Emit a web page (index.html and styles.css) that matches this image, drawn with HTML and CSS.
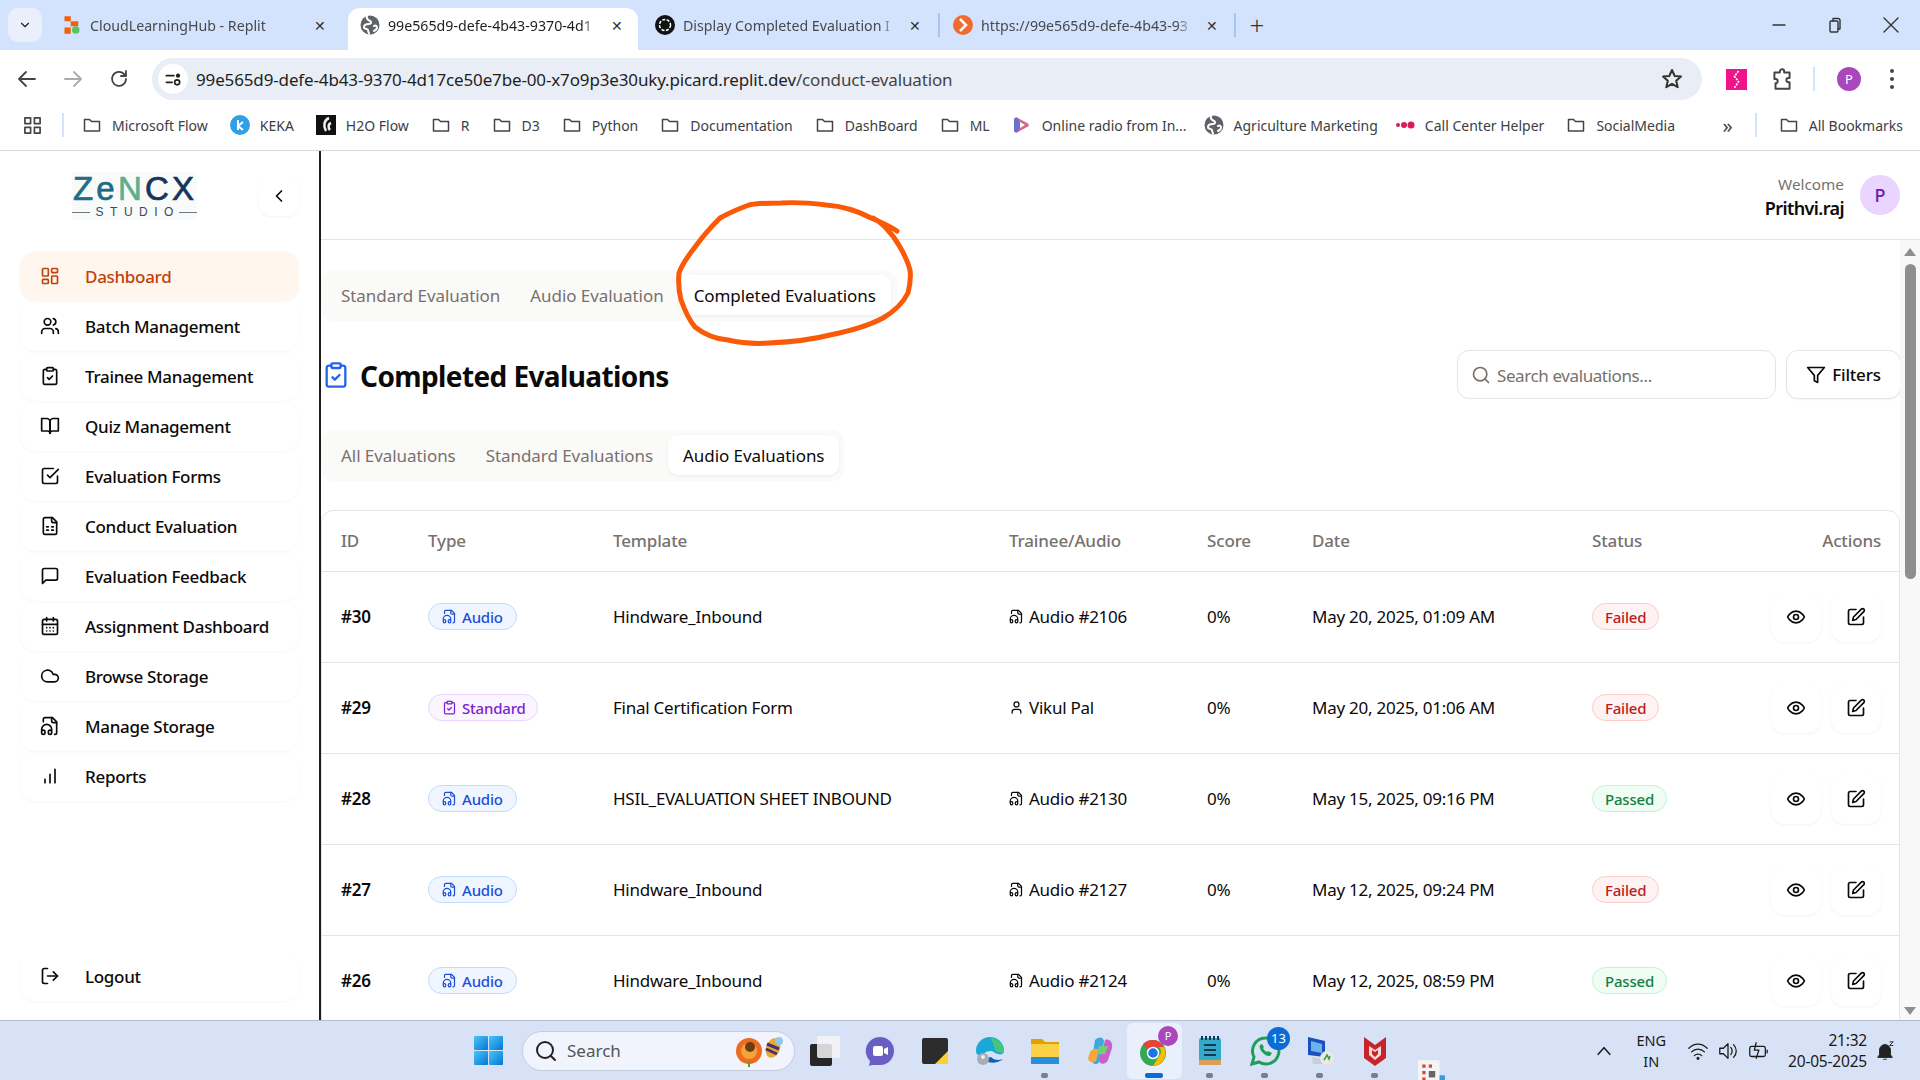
FILE: index.html
```html
<!DOCTYPE html>
<html lang="en">
<head>
    <meta charset="UTF-8">
    <title>Completed Evaluations</title>
    <link rel="stylesheet" href="styles.css">
</head>
<body>

<svg class="sprite" width="0" height="0">
    <symbol id="i-dash" viewBox="0 0 24 24"><rect x="3" y="3" width="7" height="9" rx="1"/><rect x="14" y="3" width="7" height="5" rx="1"/><rect x="14" y="12" width="7" height="9" rx="1"/><rect x="3" y="16" width="7" height="5" rx="1"/></symbol>
    <symbol id="i-users" viewBox="0 0 24 24"><path d="M16 21v-2a4 4 0 0 0-4-4H6a4 4 0 0 0-4 4v2"/><circle cx="9" cy="7" r="4"/><path d="M22 21v-2a4 4 0 0 0-3-3.87"/><path d="M16 3.13a4 4 0 0 1 0 7.75"/></symbol>
    <symbol id="i-clip" viewBox="0 0 24 24"><rect x="8" y="2" width="8" height="4" rx="1"/><path d="M16 4h2a2 2 0 0 1 2 2v14a2 2 0 0 1-2 2H6a2 2 0 0 1-2-2V6a2 2 0 0 1 2-2h2"/><path d="m9 14 2 2 4-4"/></symbol>
    <symbol id="i-book" viewBox="0 0 24 24"><path d="M2 3h6a4 4 0 0 1 4 4v14a3 3 0 0 0-3-3H2z"/><path d="M22 3h-6a4 4 0 0 0-4 4v14a3 3 0 0 1 3-3h7z"/></symbol>
    <symbol id="i-check" viewBox="0 0 24 24"><path d="m9 11 3 3L22 4"/><path d="M21 12v7a2 2 0 0 1-2 2H5a2 2 0 0 1-2-2V5a2 2 0 0 1 2-2h11"/></symbol>
    <symbol id="i-sheet" viewBox="0 0 24 24"><path d="M15 2H6a2 2 0 0 0-2 2v16a2 2 0 0 0 2 2h12a2 2 0 0 0 2-2V7Z"/><path d="M14 2v4a2 2 0 0 0 2 2h4"/><path d="M8 13h2M14 13h2M8 17h2M14 17h2"/></symbol>
    <symbol id="i-msg" viewBox="0 0 24 24"><path d="M21 15a2 2 0 0 1-2 2H7l-4 4V5a2 2 0 0 1 2-2h14a2 2 0 0 1 2 2z"/></symbol>
    <symbol id="i-cal" viewBox="0 0 24 24"><path d="M8 2v4M16 2v4"/><rect x="3" y="4" width="18" height="18" rx="2"/><path d="M3 10h18M8 14h.01M12 14h.01M16 14h.01M8 18h.01M12 18h.01M16 18h.01"/></symbol>
    <symbol id="i-cloud" viewBox="0 0 24 24"><path d="M17.5 19H9a7 7 0 1 1 6.71-9h1.79a4.5 4.5 0 1 1 0 9Z"/></symbol>
    <symbol id="i-audio" viewBox="0 0 24 24"><path d="M17.5 22h.5a2 2 0 0 0 2-2V7l-5-5H6a2 2 0 0 0-2 2v3"/><path d="M14 2v4a2 2 0 0 0 2 2h4"/><path d="M2 19a2 2 0 1 1 4 0v1a2 2 0 1 1-4 0v-4a6 6 0 0 1 12 0v4a2 2 0 1 1-4 0v-1a2 2 0 1 1 4 0"/></symbol>
    <symbol id="i-bars" viewBox="0 0 24 24"><path d="M12 20V10M18 20V4M6 20v-4"/></symbol>
    <symbol id="i-logout" viewBox="0 0 24 24"><path d="M9 21H5a2 2 0 0 1-2-2V5a2 2 0 0 1 2-2h4"/><path d="m16 17 5-5-5-5"/><path d="M21 12H9"/></symbol>
    <symbol id="i-left" viewBox="0 0 24 24"><path d="m15 18-6-6 6-6"/></symbol>
    <symbol id="i-eye" viewBox="0 0 24 24"><path d="M2 12s3-7 10-7 10 7 10 7-3 7-10 7-10-7-10-7Z"/><circle cx="12" cy="12" r="3"/></symbol>
    <symbol id="i-pen" viewBox="0 0 24 24"><path d="M12 3H5a2 2 0 0 0-2 2v14a2 2 0 0 0 2 2h14a2 2 0 0 0 2-2v-7"/><path d="M18.375 2.625a2.121 2.121 0 1 1 3 3L12 15l-4 1 1-4Z"/></symbol>
    <symbol id="i-search" viewBox="0 0 24 24"><circle cx="11" cy="11" r="8"/><path d="m21 21-4.3-4.3"/></symbol>
    <symbol id="i-filter" viewBox="0 0 24 24"><polygon points="22 3 2 3 10 12.46 10 19 14 21 14 12.46 22 3"/></symbol>
    <symbol id="i-user" viewBox="0 0 24 24"><path d="M19 21v-2a4 4 0 0 0-4-4H9a4 4 0 0 0-4 4v2"/><circle cx="12" cy="7" r="4"/></symbol>
    <symbol id="i-folder" viewBox="0 0 20 20"><path d="M2.5 4.5h5l2 2h8v9.5h-15z"/></symbol>
    <symbol id="i-globe" viewBox="0 0 20 20"><circle cx="10" cy="10" r="9.500" fill="#5f6368" stroke="none"/><path d="M7 1.500C6 4 8 5 10 6s1 3-1 3-5 0-5 3 4 1 4 3 1 3 1 3.500M14 11c2-1 3 0 3 1.500s-2 3-3 3.500" fill="none" stroke="#fff" stroke-width="2"/></symbol>
</svg>

<!-- browser tabs -->
<div class="tabstrip">
    <div class="tab-list"><svg class="ic s14" viewBox="0 0 24 24"><path d="m6 9 6 6 6-6"/></svg></div>
    <div class="tab tab-first">
        <svg class="fav" viewBox="0 0 16 16"><rect x="2" y="1" width="5" height="4" fill="#f26207"/><rect x="7" y="5" width="6" height="4" fill="#f26207"/><rect x="2" y="10" width="5" height="5" fill="#f26207"/><circle cx="11" cy="12" r="3" fill="#58c26b"/></svg>
        <span class="tab-title">CloudLearningHub - Replit</span><span class="tab-x">✕</span>
    </div>
    <div class="tab tab-active">
        <svg class="fav ic"><use href="#i-globe"/></svg>
        <span class="tab-title">99e565d9-defe-4b43-9370-4d1</span><span class="tab-x">✕</span>
    </div>
    <div class="tab tab-sep tab-third">
        <svg class="fav" viewBox="0 0 20 20"><circle cx="10" cy="10" r="10" fill="#111"/><circle cx="10" cy="10" r="5.5" fill="none" stroke="#fff" stroke-width="1.5" stroke-dasharray="3 1.5"/></svg>
        <span class="tab-title">Display Completed Evaluation I</span><span class="tab-x">✕</span>
    </div>
    <div class="tab tab-sep tab-fourth">
        <svg class="fav" viewBox="0 0 20 20"><circle cx="10" cy="10" r="10" fill="#f26b2e"/><path d="M7 4l6 6-6 6" fill="none" stroke="#fff" stroke-width="2.5"/></svg>
        <span class="tab-title">https://99e565d9-defe-4b43-93</span><span class="tab-x">✕</span>
    </div>
    <div class="new-tab">+</div>
    <div class="win-btns">
        <svg class="ic thin s20" viewBox="0 0 20 20"><path d="M4 10h12"/></svg>
        <svg class="ic thin s20" viewBox="0 0 20 20"><rect x="5" y="6" width="8" height="11" rx="1"/><path d="M8 6V3.5h5a2 2 0 0 1 2 2V14h-2"/></svg>
        <svg class="ic thin s20" viewBox="0 0 20 20"><path d="M3 3l14 14M17 3L3 17"/></svg>
    </div>
</div>

<!-- address bar -->
<div class="toolbar">
    <svg class="ic nav-btn" viewBox="0 0 24 24"><path d="M20 12H5M11 5l-7 7 7 7"/></svg>
    <svg class="ic nav-btn nav-off" viewBox="0 0 24 24"><path d="M4 12h15M13 5l7 7-7 7"/></svg>
    <svg class="ic nav-btn" viewBox="0 0 24 24"><path d="M19 12a7 7 0 1 1-2-5l2 2M19 4v5h-5"/></svg>
    <div class="omnibox">
        <div class="site-chip"><svg class="ic s20" viewBox="0 0 24 24"><path d="M4 8h9M4 16h7"/><circle cx="18" cy="8" r="1.5" fill="#1f1f1f"/><circle cx="17" cy="16" r="3"/></svg></div>
        <span class="url">99e565d9-defe-4b43-9370-4d17ce50e7be-00-x7o9p3e30uky.picard.replit.dev<span class="url-path">/conduct-evaluation</span></span>
        <svg class="ic star" viewBox="0 0 24 24"><path d="M12 3l2.7 6 6.3.6-4.800 4.200 1.500 6.400L12 16.800 6.300 20.200l1.500-6.400L3 9.600 9.300 9z"/></svg>
    </div>
    <div class="ext-pink">
        <svg viewBox="0 0 20 20"><path d="M12 2L8 7l4 5-4 6" fill="none" stroke="#fff" stroke-width="1.500" stroke-dasharray="2 1"/></svg>
    </div>
    <svg class="ic puzzle" viewBox="0 0 24 24"><path d="M5 6h5V5a2 2 0 0 1 4 0v1h5v5h-1a2 2 0 0 0 0 4h1v6H6v-5a2 2 0 0 0 0-4H5z"/></svg>
    <div class="tool-sep"></div>
    <div class="profile">P</div>
    <div class="dots"><i></i><i></i><i></i></div>
</div>

<!-- bookmarks -->
<div class="bookmarks">
    <svg class="ic apps" viewBox="0 0 20 20"><rect x="2" y="2" width="6" height="6"/><rect x="12" y="2" width="6" height="6"/><rect x="2" y="12" width="6" height="6"/><rect x="12" y="12" width="6" height="6"/></svg>
    <div class="bm-sep"></div>
    <div class="bm"><svg class="ic bm-ic"><use href="#i-folder"/></svg>Microsoft Flow</div>
    <div class="bm"><svg class="bm-ic" viewBox="0 0 20 20"><circle cx="10" cy="10" r="10" fill="#2f9fe8"/><path d="M8 5v10M13 7l-5 4 5 4" fill="none" stroke="#fff" stroke-width="2"/></svg>KEKA</div>
    <div class="bm"><svg class="bm-ic" viewBox="0 0 20 20"><rect width="20" height="20" fill="#111"/><path d="M13 3c-5 2-6 8-3 13M15 8c-3 1-3 5-1 7" fill="none" stroke="#eee" stroke-width="2.500"/></svg>H2O Flow</div>
    <div class="bm"><svg class="ic bm-ic"><use href="#i-folder"/></svg>R</div>
    <div class="bm"><svg class="ic bm-ic"><use href="#i-folder"/></svg>D3</div>
    <div class="bm"><svg class="ic bm-ic"><use href="#i-folder"/></svg>Python</div>
    <div class="bm"><svg class="ic bm-ic"><use href="#i-folder"/></svg>Documentation</div>
    <div class="bm"><svg class="ic bm-ic"><use href="#i-folder"/></svg>DashBoard</div>
    <div class="bm"><svg class="ic bm-ic"><use href="#i-folder"/></svg>ML</div>
    <div class="bm bm-tight"><svg class="bm-ic" viewBox="0 0 20 20"><path d="M5 2.500l11 6a2 2 0 0 1 0 3l-11 6a2.500 2.500 0 0 1-3-2v-11a2.500 2.500 0 0 1 3-2z" fill="#d4688e"/><path d="M2 4.500v11a2.500 2.500 0 0 0 3 2L9 10 5 2.500a2.500 2.500 0 0 0-3 2z" fill="#6a6fd0"/><path d="M8 7l5 3-5 3z" fill="#fff"/></svg>Online radio from In...</div>
    <div class="bm bm-tight"><svg class="ic bm-ic"><use href="#i-globe"/></svg>Agriculture Marketing</div>
    <div class="bm"><svg class="bm-ic" viewBox="0 0 20 20"><circle cx="3" cy="10" r="2" fill="#d81b60"/><circle cx="9" cy="10" r="3" fill="#d81b60"/><circle cx="16" cy="10" r="3.500" fill="#d81b60"/></svg>Call Center Helper</div>
    <div class="bm"><svg class="ic bm-ic"><use href="#i-folder"/></svg>SocialMedia</div>
    <div class="bm-more">»</div>
    <div class="bm-sep bm-sep-last"></div>
    <div class="bm bm-all"><svg class="ic bm-ic"><use href="#i-folder"/></svg>All Bookmarks</div>
</div>

<!-- app -->
<div class="app">
    <aside class="sidebar">
        <div class="logo-row">
            <div class="logo">
                <div class="logo-word"><span class="l-z">Z</span><span class="l-e">e</span><span class="l-n">N</span><span class="l-c">CX</span></div>
                <div class="logo-sub"><i></i><span>STUDIO</span><i></i></div>
            </div>
            <button class="collapse"><svg class="ic s20"><use href="#i-left"/></svg></button>
        </div>
        <nav class="menu">
            <a class="menu-item active"><svg class="ic"><use href="#i-dash"/></svg>Dashboard</a>
            <a class="menu-item"><svg class="ic"><use href="#i-users"/></svg>Batch Management</a>
            <a class="menu-item"><svg class="ic"><use href="#i-clip"/></svg>Trainee Management</a>
            <a class="menu-item"><svg class="ic"><use href="#i-book"/></svg>Quiz Management</a>
            <a class="menu-item"><svg class="ic"><use href="#i-check"/></svg>Evaluation Forms</a>
            <a class="menu-item"><svg class="ic"><use href="#i-sheet"/></svg>Conduct Evaluation</a>
            <a class="menu-item"><svg class="ic"><use href="#i-msg"/></svg>Evaluation Feedback</a>
            <a class="menu-item"><svg class="ic"><use href="#i-cal"/></svg>Assignment Dashboard</a>
            <a class="menu-item"><svg class="ic"><use href="#i-cloud"/></svg>Browse Storage</a>
            <a class="menu-item"><svg class="ic"><use href="#i-audio"/></svg>Manage Storage</a>
            <a class="menu-item"><svg class="ic"><use href="#i-bars"/></svg>Reports</a>
            <a class="menu-item logout"><svg class="ic"><use href="#i-logout"/></svg>Logout</a>
        </nav>
    </aside>

    <div class="main">
        <header class="topbar">
            <div class="who"><span class="welcome">Welcome</span><strong>Prithvi.raj</strong></div>
            <div class="avatar">P</div>
        </header>
        <div class="scroller">
            <div class="content">
                <div class="pill-tabs">
                    <span class="pill">Standard Evaluation</span>
                    <span class="pill">Audio Evaluation</span>
                    <span class="pill on">Completed Evaluations</span>
                </div>
                <div class="title-row">
                    <svg class="ic title-ic"><use href="#i-clip"/></svg>
                    <h1>Completed Evaluations</h1>
                    <div class="search"><svg class="ic s20"><use href="#i-search"/></svg><span>Search evaluations...</span></div>
                    <button class="filters"><svg class="ic s20"><use href="#i-filter"/></svg>Filters</button>
                </div>
                <div class="pill-tabs tabs-two">
                    <span class="pill">All Evaluations</span>
                    <span class="pill">Standard Evaluations</span>
                    <span class="pill on">Audio Evaluations</span>
                </div>
                <div class="card">
                    <table>
                        <colgroup>
                            <col class="c-id"><col class="c-type"><col class="c-tpl"><col class="c-who"><col class="c-score"><col class="c-date"><col class="c-status"><col class="c-act">
                        </colgroup>
                        <thead>
                            <tr><th>ID</th><th>Type</th><th>Template</th><th>Trainee/Audio</th><th>Score</th><th>Date</th><th>Status</th><th class="right">Actions</th></tr>
                        </thead>
                        <tbody>
                            <tr>
                                <td class="id">#30</td>
                                <td><span class="badge audio"><svg class="ic"><use href="#i-audio"/></svg>Audio</span></td>
                                <td>Hindware_Inbound</td>
                                <td><span class="who-cell"><svg class="ic"><use href="#i-audio"/></svg>Audio #2106</span></td>
                                <td>0%</td>
                                <td>May 20, 2025, 01:09 AM</td>
                                <td><span class="badge failed">Failed</span></td>
                                <td class="right"><div class="acts"><button><svg class="ic"><use href="#i-eye"/></svg></button><button><svg class="ic"><use href="#i-pen"/></svg></button></div></td>
                            </tr>
                            <tr>
                                <td class="id">#29</td>
                                <td><span class="badge standard"><svg class="ic"><use href="#i-clip"/></svg>Standard</span></td>
                                <td>Final Certification Form</td>
                                <td><span class="who-cell"><svg class="ic"><use href="#i-user"/></svg>Vikul Pal</span></td>
                                <td>0%</td>
                                <td>May 20, 2025, 01:06 AM</td>
                                <td><span class="badge failed">Failed</span></td>
                                <td class="right"><div class="acts"><button><svg class="ic"><use href="#i-eye"/></svg></button><button><svg class="ic"><use href="#i-pen"/></svg></button></div></td>
                            </tr>
                            <tr>
                                <td class="id">#28</td>
                                <td><span class="badge audio"><svg class="ic"><use href="#i-audio"/></svg>Audio</span></td>
                                <td>HSIL_EVALUATION SHEET INBOUND</td>
                                <td><span class="who-cell"><svg class="ic"><use href="#i-audio"/></svg>Audio #2130</span></td>
                                <td>0%</td>
                                <td>May 15, 2025, 09:16 PM</td>
                                <td><span class="badge passed">Passed</span></td>
                                <td class="right"><div class="acts"><button><svg class="ic"><use href="#i-eye"/></svg></button><button><svg class="ic"><use href="#i-pen"/></svg></button></div></td>
                            </tr>
                            <tr>
                                <td class="id">#27</td>
                                <td><span class="badge audio"><svg class="ic"><use href="#i-audio"/></svg>Audio</span></td>
                                <td>Hindware_Inbound</td>
                                <td><span class="who-cell"><svg class="ic"><use href="#i-audio"/></svg>Audio #2127</span></td>
                                <td>0%</td>
                                <td>May 12, 2025, 09:24 PM</td>
                                <td><span class="badge failed">Failed</span></td>
                                <td class="right"><div class="acts"><button><svg class="ic"><use href="#i-eye"/></svg></button><button><svg class="ic"><use href="#i-pen"/></svg></button></div></td>
                            </tr>
                            <tr>
                                <td class="id">#26</td>
                                <td><span class="badge audio"><svg class="ic"><use href="#i-audio"/></svg>Audio</span></td>
                                <td>Hindware_Inbound</td>
                                <td><span class="who-cell"><svg class="ic"><use href="#i-audio"/></svg>Audio #2124</span></td>
                                <td>0%</td>
                                <td>May 12, 2025, 08:59 PM</td>
                                <td><span class="badge passed">Passed</span></td>
                                <td class="right"><div class="acts"><button><svg class="ic"><use href="#i-eye"/></svg></button><button><svg class="ic"><use href="#i-pen"/></svg></button></div></td>
                            </tr>
                        </tbody>
                    </table>
                </div>
            </div>
            <div class="scrollbar">
                <i class="arrow-up"></i>
                <div class="thumb"></div>
                <i class="arrow-down"></i>
            </div>
        </div>
    </div>
</div>

<!-- hand drawn circle over the tab -->
<svg class="scribble" viewBox="670 195 250 155">
    <path d="M897 231C888 225 881 222 871 218C856 210 841 206 826 205C810 203 795 202 781 203C769 203 758 203 749 205C738 209 729 213 720 218C711 227 703 236 695 247C688 256 682 264 679 273C678 283 679 292 681 300C685 311 689 320 695 327C705 335 716 339 728 340C741 343 755 344 769 343C791 342 811 340 830 335C850 331 868 326 883 318C895 311 903 303 908 293C910 285 911 277 910 270C908 262 904 254 900 247C895 238 890 232 885 227C881 223 877 220 873 218"/>
</svg>

<!-- windows taskbar -->
<div class="taskbar">
    <svg class="win-logo" viewBox="0 0 30 30">
        <defs><linearGradient id="wg" x1="0" y1="0" x2="1" y2="1"><stop offset="0" stop-color="#4fc3f7"/><stop offset="1" stop-color="#0078d4"/></linearGradient></defs>
        <rect x="0" y="0" width="14" height="14" rx="1" fill="url(#wg)"/><rect x="15" y="0" width="14" height="14" rx="1" fill="url(#wg)"/><rect x="0" y="15" width="14" height="14" rx="1" fill="url(#wg)"/><rect x="15" y="15" width="14" height="14" rx="1" fill="url(#wg)"/>
    </svg>
    <div class="task-search">
        <svg class="ic s22" viewBox="0 0 24 24"><circle cx="11" cy="11" r="8"/><path d="m21 21-4.300-4.300"/></svg>
        <span>Search</span>
        <svg class="flower" viewBox="0 0 50 32">
            <circle cx="14" cy="16" r="13" fill="#ee6a1f"/><circle cx="14" cy="16" r="8" fill="#f2a33a"/><circle cx="15" cy="12" r="5" fill="#6b3d14"/><path d="M14 26v6" stroke="#6a9a2a" stroke-width="2"/>
            <ellipse cx="38" cy="13" rx="7" ry="10" fill="#e8a92f" transform="rotate(20 38 13)"/><path d="M32 9l12 5M31 14l11 5" stroke="#4b2f6b" stroke-width="3"/><circle cx="44" cy="6" r="4" fill="#8ec8ef"/>
        </svg>
    </div>
    <div class="task-icons">
        <div class="t-app"><svg viewBox="0 0 32 32"><rect x="1" y="9" width="22" height="22" rx="2" fill="#262626"/><rect x="8" y="1" width="23" height="22" rx="2" fill="#f4f4f6" opacity=".85"/></svg></div>
        <div class="t-app"><svg viewBox="0 0 32 32"><path d="M16 2a14 14 0 0 1 0 28H8l-3 1 1-5a14 14 0 0 1 10-24z" fill="#6a5ec4"/><rect x="9" y="11" width="10" height="10" rx="2" fill="#fff"/><path d="M20 14l4-2v8l-4-2z" fill="#fff"/></svg></div>
        <div class="t-app"><svg viewBox="0 0 32 32"><rect x="3" y="3" width="26" height="26" rx="2" fill="#2c2c2c"/><path d="M16 29l13-13v13z" fill="#f6d32d"/></svg></div>
        <div class="t-app"><svg viewBox="0 0 32 32"><path d="M2 16a14 14 0 0 1 28 0c0 3-3 4-6 3-3 0-4-3-7-3-6 0-8 3-8 6-5-1-7-3-7-6z" fill="#19a8d8"/><path d="M16 3a14 14 0 0 1 14 13c0 2-5 3-9-1-2-6-2-9-5-12z" fill="#44c77a"/><path d="M9 24c5 5 14 5 20 0-5 2-9 1-12-2z" fill="#0b63ba"/><circle cx="9" cy="24" r="6" fill="#a9adb5"/><circle cx="9" cy="22" r="2" fill="#eee"/></svg></div>
        <div class="t-app has-dot"><svg viewBox="0 0 32 32"><path d="M2 4h11l3 3h14v5H2z" fill="#e0a100"/><rect x="2" y="9" width="28" height="20" rx="1" fill="#fbd145"/><rect x="2" y="22" width="28" height="7" fill="#2a8fd8"/></svg></div>
        <div class="t-app"><svg viewBox="0 0 32 32"><path d="M11 5c4-4 9-3 9 2l-5 20c-2 4-8 2-7-3z" fill="#3fa7e0"/><path d="M21 5c5-2 8 3 7 8l-4 12c-2 5-9 5-9 0l5-16z" fill="#c95fc9"/><path d="M6 17c3-4 8-4 9-1l-3 10c-2 3-8 1-8-3z" fill="#f6a83b"/><path d="M15 11h9l-3 8h-8z" fill="#6ed06e"/></svg></div>
        <div class="t-app t-chrome has-bar">
            <svg viewBox="0 0 32 32"><circle cx="14" cy="18" r="13" fill="#34a853"/><path d="M14 5a13 13 0 0 1 11 7H14a6 6 0 0 0-5 3L4 9a13 13 0 0 1 10-4z" fill="#ea4335"/><path d="M25 12a13 13 0 0 1-11 19l6-10a6 6 0 0 0 0-9z" fill="#fbbc04"/><circle cx="14" cy="18" r="5.500" fill="#1a73e8" stroke="#fff" stroke-width="1.500"/></svg>
            <b class="chrome-p">P</b>
        </div>
        <div class="t-app has-dot"><svg viewBox="0 0 32 32"><rect x="5" y="3" width="22" height="27" rx="2" fill="#35a9c9"/><path d="M10 10h12M10 15h12M10 20h12" stroke="#123a50" stroke-width="2"/><rect x="5" y="25" width="22" height="5" fill="#d8a15a"/><path d="M8 1v4M12 1v4M16 1v4M20 1v4M24 1v4" stroke="#123a50" stroke-width="2"/></svg></div>
        <div class="t-app t-wa has-dot">
            <svg viewBox="0 0 32 32"><path d="M16 3a13 13 0 1 1-6 24l-7 2 2-7A13 13 0 0 1 16 3z" fill="none" stroke="#1f9e5b" stroke-width="3"/><path d="M11 10c-2 4 5 12 10 11l2-3-4-2-1 1c-2-1-3-2-4-4l1-1-2-3z" fill="#1f9e5b"/></svg>
            <b class="wa-count">13</b>
        </div>
        <div class="t-app has-dot"><svg viewBox="0 0 32 32"><path d="M4 2l17 4v16L4 20z" fill="#1b4fbf"/><path d="M7 6l11 3v9L7 16z" fill="#6db4ef"/><path d="M8 22l12 2v5H9z" fill="#c9ced6"/><circle cx="23" cy="23" r="7" fill="#e9e9e9"/><path d="M20 25l3-5 2 4 1-3" fill="none" stroke="#3a9d3a" stroke-width="1.500"/></svg></div>
        <div class="t-app has-dot"><svg viewBox="0 0 32 32"><path d="M5 2l11 8 11-8v21l-11 8-11-8z" fill="#c8242b"/><path d="M10 11l6 4 6-4v9l-6 5-6-5z" fill="#f3dada"/><path d="M13 15l3 2 3-2v4l-3 3-3-3z" fill="#c8242b"/></svg></div>
    </div>
    <div class="tray">
        <svg class="ic tray-up" viewBox="0 0 24 24"><path d="M5 16l7-8 7 8"/></svg>
        <div class="lang"><span>ENG</span><span>IN</span></div>
        <svg class="ic thin tray-ic" viewBox="0 0 24 24"><path d="M2 9c6-6 14-6 20 0M5 13c4-4 10-4 14 0M8 17c2-2 6-2 8 0"/><circle cx="12" cy="20" r="1"/></svg>
        <svg class="ic thin tray-ic" viewBox="0 0 24 24"><path d="M3 9h4l5-5v16l-5-5H3zM15 8c2 2 2 6 0 8M18 5c4 4 4 10 0 14"/></svg>
        <svg class="ic thin tray-ic" viewBox="0 0 24 24"><rect x="3" y="7" width="17" height="11" rx="2"/><path d="M22 11v3M10 3l-2 8h5l-3 9" /></svg>
        <div class="clock"><span>21:32</span><span>20-05-2025</span></div>
        <svg class="bell" viewBox="0 0 24 24"><path d="M12 5a6 6 0 0 1 6 6v5l2 3H4l2-3v-5a6 6 0 0 1 6-6zM10 21h4" fill="#222" stroke="#222"/><path d="M17 2h4l-4 4h4" fill="none" stroke="#222"/></svg>
    </div>
</div>

<!-- icon left on the desktop, mostly under the screen edge -->
<svg class="desk-icon" viewBox="0 0 26 20"><rect x="0" y="0" width="20" height="20" fill="#f4f4f4"/><path d="M4 4h3v3H4zM10 4h3v3h-3zM4 10h3v3H4zM4 16h3v3H4z" fill="#d8452c"/><path d="M10 10h6v6h-6z" fill="#666"/><path d="M20 14h5v6h-5z" fill="#3a9ad9"/></svg>

</body>
</html>
```

FILE: styles.css
```css
* {
    box-sizing: border-box;
}
html, body {
    margin: 0;
    padding: 0;
}
body {
    position: relative;
    display: flex;
    flex-direction: column;
    width: 1920px;
    height: 1080px;
    overflow: hidden;
    background: #fff;
    color: #0c0a09;
    font-family: "Noto Sans", "Open Sans", sans-serif;
}
.sprite {
    position: absolute;
}
.ic {
    width: 20px;
    height: 20px;
    flex: none;
    fill: none;
    stroke: currentColor;
    stroke-width: 2;
    stroke-linecap: round;
    stroke-linejoin: round;
}
.thin {
    stroke-width: 1.4;
}
.s14 { width: 14px; height: 14px; }
.s20 { width: 20px; height: 20px; }
.s22 { width: 24px; height: 24px; }

/* tab strip */
.tabstrip {
    display: flex;
    align-items: flex-end;
    height: 50px;
    background: #d3e3fd;
    padding-left: 8px;
    color: #333;
    flex: none;
}
.tab-list {
    display: flex;
    align-items: center;
    justify-content: center;
    width: 34px;
    height: 34px;
    margin-bottom: 8px;
    border-radius: 10px;
    background: #e9f0fc;
    color: #1f1f1f;
    stroke-width: 3;
}
.tab {
    display: flex;
    align-items: center;
    width: 290px;
    height: 42px;
    padding: 0 11px 8px 12px;
    font-size: 14.2px;
    color: #47494d;
    position: relative;
}
.tab-first {
    margin-left: 6px;
    width: 300px;
    padding-left: 14px;
    padding-right: 18px;
}
.tab-active {
    background: #fff;
    border-radius: 12px 12px 0 0;
    color: #1f1f1f;
}
.tab-sep::after {
    content: "";
    position: absolute;
    right: 0;
    top: 5px;
    height: 24px;
    width: 2px;
    background: #a9c6f2;
}
.tab-third {
    width: 302px;
    padding-left: 17px;
    padding-right: 15px;
}
.tab-fourth {
    width: 296px;
    padding-left: 13px;
    padding-right: 14px;
}
.fav {
    width: 20px;
    height: 20px;
    flex: none;
    margin-right: 8px;
}
.tab-title {
    flex: 1;
    min-width: 0;
    white-space: nowrap;
    overflow: hidden;
    -webkit-mask-image: linear-gradient(90deg, #000 92%, transparent);
    mask-image: linear-gradient(90deg, #000 92%, transparent);
}
.tab-x {
    width: 20px;
    text-align: center;
    font-size: 14px;
    color: #333;
    margin-left: 8px;
}
.new-tab {
    align-self: center;
    width: 28px;
    margin-left: 7px;
    font-size: 26px;
    line-height: 28px;
    text-align: center;
    color: #333;
    font-weight: 300;
}
.win-btns {
    margin-left: auto;
    display: flex;
    gap: 36px;
    align-self: center;
    padding-right: 19px;
}

/* address bar */
.toolbar {
    display: flex;
    align-items: center;
    height: 50px;
    padding: 8px 0 0 15px;
    background: #fff;
    flex: none;
    border-radius: 8px 8px 0 0;
    margin-top: 0;
    color: #444;
}
.nav-btn {
    width: 24px;
    height: 24px;
    margin-right: 22px;
    stroke-width: 1.8;
}
.nav-off {
    color: #a8abb0;
}
.omnibox {
    display: flex;
    align-items: center;
    width: 1550px;
    height: 42px;
    margin-left: -1px;
    background: #e9eef6;
    border-radius: 21px;
    padding: 0 18px 0 6px;
}
.site-chip {
    display: flex;
    align-items: center;
    justify-content: center;
    width: 30px;
    height: 30px;
    border-radius: 50%;
    background: #fff;
    color: #1f1f1f;
}
.url {
    margin-left: 8px;
    font-size: 17px;
    letter-spacing: -.14px;
    color: #1f1f1f;
    white-space: nowrap;
}
.url-path {
    color: #444;
}
.star {
    margin-left: auto;
    width: 24px;
    height: 24px;
    color: #333;
}
.ext-pink {
    width: 21px;
    height: 21px;
    margin-left: 24px;
    background: #f0148c;
    flex: none;
}
.ext-pink svg {
    display: block;
    width: 21px;
    height: 21px;
}
.puzzle {
    width: 26px;
    height: 26px;
    margin-left: 22px;
    stroke-width: 1.8;
}
.tool-sep {
    width: 2px;
    height: 24px;
    margin-left: 18px;
    background: #d3e3fd;
}
.profile {
    width: 24px;
    height: 24px;
    margin-left: 22px;
    border-radius: 50%;
    background: #ab47bc;
    color: #fff;
    font-size: 13px;
    line-height: 24px;
    text-align: center;
}
.dots {
    display: flex;
    flex-direction: column;
    gap: 4px;
    margin-left: 29px;
}
.dots i {
    width: 4px;
    height: 4px;
    border-radius: 50%;
    background: #444;
}

/* bookmarks */
.bookmarks {
    display: flex;
    align-items: center;
    height: 51px;
    padding: 0 17px 0 23px;
    border-bottom: 1px solid #d9d9d9;
    font-size: 14px;
    color: #3c4043;
    white-space: nowrap;
    flex: none;
}
.apps {
    width: 19px;
    height: 19px;
    color: #444;
    stroke-width: 1.8;
}
.bm-sep {
    width: 2px;
    height: 24px;
    margin: 0 18px 0 20px;
    background: #d3e3fd;
}
.bm-sep-last {
    margin: 0 22px;
}
.bm {
    display: flex;
    align-items: center;
    margin-right: 22px;
}
.bm-tight {
    margin-right: 17px;
}
.bm-ic {
    width: 20px;
    height: 20px;
    margin-right: 10px;
    color: #444;
    stroke-width: 1.5;
}
.bm-more {
    margin-left: auto;
    font-size: 20px;
    color: #444;
}
.bm-all {
    margin: 0;
}

/* app layout */
.app {
    flex: 1;
    display: flex;
    min-height: 0;
}
.sidebar {
    display: flex;
    flex-direction: column;
    width: 321px;
    flex: none;
    padding: 0 20px 19px;
    border-right: 2px solid #1c1c1c;
}
.logo-row {
    display: flex;
    justify-content: space-between;
    align-items: center;
    height: 100px;
    padding-left: 52px;
    padding-bottom: 10px;
}
.logo {
    width: 125px;
    height: 48px;
    padding-top: 2px;
    background: #f9fafa;
}
.logo-word {
    font-family: "Liberation Sans", sans-serif;
    font-size: 33px;
    line-height: 30px;
    letter-spacing: 3.200px;
    padding-left: 1px;
    -webkit-text-stroke: .7px currentColor;
    white-space: nowrap;
}
.l-z { color: #1f6f8b; }
.l-e { color: #1c6b86; }
.l-n { color: #5fb08a; }
.l-c { color: #14365a; }
.logo-sub {
    display: flex;
    align-items: center;
    gap: 6px;
    margin-top: 2px;
    font-family: "Liberation Sans", sans-serif;
    font-size: 12px;
    line-height: 12px;
    letter-spacing: 6.500px;
    color: #3a4a5c;
}
.logo-sub i {
    flex: 1;
    height: 1px;
    background: #6b7785;
}
.logo-sub span {
    margin-right: -6.500px;
}
.collapse {
    display: flex;
    align-items: center;
    justify-content: center;
    width: 40px;
    height: 40px;
    padding: 0;
    border: none;
    border-radius: 12px;
    background: #fff;
    color: #0c0a09;
    box-shadow: 0 1px 3px rgba(0, 0, 0, .05);
}
.menu {
    flex: 1;
    display: flex;
    flex-direction: column;
}
.menu-item {
    display: flex;
    align-items: center;
    gap: 25px;
    height: 50px;
    padding-left: 20px;
    flex: none;
    border-radius: 16px;
    font-size: 17px;
    font-weight: 500;
    letter-spacing: -.3px;
    box-shadow: 0 1px 3px rgba(0, 0, 0, .04);
}
.menu-item.active {
    background: #fff7ed;
    color: #c2410c;
}
.logout {
    margin-top: auto;
}

/* main column */
.main {
    flex: 1;
    display: flex;
    flex-direction: column;
    min-width: 0;
}
.topbar {
    display: flex;
    align-items: center;
    justify-content: flex-end;
    gap: 16px;
    height: 89px;
    padding-right: 20px;
    border-bottom: 1px solid #e7e5e4;
    flex: none;
}
.who {
    display: flex;
    flex-direction: column;
    align-items: flex-end;
    padding-top: 3px;
}
.welcome {
    font-size: 15.3px;
    line-height: 22px;
    color: #78716c;
}
.who strong {
    font-size: 18px;
    line-height: 26px;
    font-weight: 600;
    letter-spacing: -.6px;
}
.avatar {
    width: 40px;
    height: 40px;
    border-radius: 50%;
    background: #e9d5ff;
    color: #6b21a8;
    font-size: 18px;
    font-weight: 500;
    line-height: 40px;
    text-align: center;
}
.scroller {
    flex: 1;
    display: flex;
    min-height: 0;
    overflow: hidden;
}
.content {
    flex: 1;
    min-width: 0;
    padding-top: 30px;
}
.pill-tabs {
    display: inline-flex;
    align-items: center;
    height: 50px;
    padding: 0 6px 0 5px;
    border-radius: 12px;
    background: #fafaf9;
    box-shadow: 0 1px 2px rgba(0, 0, 0, .03);
    vertical-align: top;
}
.pill {
    height: 40px;
    padding: 0 15px;
    border-radius: 10px;
    font-size: 17px;
    letter-spacing: -.06px;
    line-height: 41px;
    color: #78716c;
    white-space: nowrap;
}
.pill.on {
    background: #fff;
    color: #0c0a09;
    box-shadow: 0 1px 3px rgba(0, 0, 0, .06);
}
.title-row {
    display: flex;
    align-items: center;
    height: 49px;
    margin: 30px 0 31px;
}
.title-ic {
    width: 28px;
    height: 28px;
    margin-left: 1px;
    color: #2563eb;
}
h1 {
    margin: 0 0 0 10px;
    padding-top: 2px;
    font-size: 28px;
    font-weight: 700;
    letter-spacing: -.6px;
    line-height: 40px;
}
.search {
    display: flex;
    align-items: center;
    gap: 6px;
    width: 319px;
    height: 49px;
    margin-left: auto;
    padding-left: 13px;
    border: 1px solid #e7e5e4;
    border-radius: 12px;
    font-size: 17px;
    letter-spacing: -.4px;
    color: #78716c;
}
.search span {
    padding-top: 2px;
}
.filters {
    display: flex;
    align-items: center;
    justify-content: center;
    gap: 6px;
    width: 115px;
    height: 49px;
    margin: 0 -1px 0 10px;
    border: 1px solid #e7e5e4;
    border-radius: 12px;
    background: #fff;
    font: 500 17px "Noto Sans", sans-serif;
    letter-spacing: -.2px;
    color: #0c0a09;
    box-shadow: 0 1px 2px rgba(0, 0, 0, .05);
}
.tabs-two {
    display: flex;
    width: 523px;
}

/* table */
.card {
    margin-top: 30px;
    border: 1px solid #e7e5e4;
    border-radius: 12px 12px 0 0;
    background: #fff;
}
table {
    width: 100%;
    table-layout: fixed;
    border-collapse: collapse;
    font-size: 17px;
    letter-spacing: -.25px;
}
.c-id { width: 87px; }
.c-type { width: 185px; }
.c-tpl { width: 396px; }
.c-who { width: 198px; }
.c-score { width: 105px; }
.c-date { width: 280px; }
.c-status { width: 177px; }
.c-act { width: 150px; }
th, td {
    padding: 0 19px;
    text-align: left;
    white-space: nowrap;
    border-bottom: 1px solid #e7e5e4;
}
th {
    height: 60px;
    font-weight: 500;
    letter-spacing: -.15px;
    color: #78716c;
}
td {
    height: 91px;
}
.right {
    text-align: right;
}
.id {
    font-weight: 600;
}
.badge {
    display: inline-flex;
    align-items: center;
    gap: 5px;
    height: 27px;
    padding: 0 13px;
    border: 1px solid;
    border-radius: 14px;
    font-size: 15px;
    font-weight: 500;
    letter-spacing: -.2px;
    vertical-align: middle;
}
.badge .ic {
    width: 15px;
    height: 15px;
}
.audio {
    background: #eff6ff;
    border-color: #bfdbfe;
    color: #1d4ed8;
}
.standard {
    padding-right: 11px;
    background: #faf5ff;
    border-color: #e9d5ff;
    color: #7e22ce;
}
.failed, .passed {
    padding: 0 12px;
}
.failed {
    background: #fef2f2;
    border-color: #fecaca;
    color: #b91c1c;
}
.passed {
    background: #f0fdf4;
    border-color: #bbf7d0;
    color: #15803d;
}
.who-cell {
    display: flex;
    align-items: center;
    gap: 5px;
}
.who-cell .ic {
    width: 15px;
    height: 15px;
}
.acts {
    display: flex;
    justify-content: flex-end;
    gap: 10px;
}
.acts button {
    display: flex;
    align-items: center;
    justify-content: center;
    width: 50px;
    height: 50px;
    padding: 0;
    border: none;
    border-radius: 14px;
    background: #fff;
    color: #0c0a09;
    box-shadow: 0 1px 3px rgba(0, 0, 0, .05);
}

/* fake scrollbar */
.scrollbar {
    display: flex;
    flex-direction: column;
    align-items: center;
    width: 20px;
    flex: none;
    padding: 8px 0 5px;
    background: #f8f8f8;
}
.arrow-up {
    border: 6px solid transparent;
    border-top: 0;
    border-bottom: 8px solid #8e8e8e;
}
.arrow-down {
    margin-top: auto;
    border: 6px solid transparent;
    border-bottom: 0;
    border-top: 8px solid #8e8e8e;
}
.thumb {
    width: 11px;
    height: 315px;
    margin-top: 8px;
    border-radius: 6px;
    background: #8e8e8e;
}

/* annotation */
.scribble {
    position: absolute;
    left: 670px;
    top: 195px;
    width: 250px;
    height: 155px;
    fill: none;
    stroke: #fa5a08;
    stroke-width: 5;
    stroke-linecap: round;
    stroke-linejoin: round;
}

/* taskbar */
.taskbar {
    display: flex;
    align-items: center;
    height: 60px;
    flex: none;
    padding-left: 474px;
    background: #d7e2f6;
    border-top: 1px solid #b4bdcf;
    position: relative;
}
.win-logo {
    width: 30px;
    height: 30px;
    flex: none;
}
.task-search {
    display: flex;
    align-items: center;
    width: 273px;
    height: 40px;
    margin-left: 18px;
    padding-left: 11px;
    border: 1px solid #c3cde0;
    border-radius: 20px;
    background: #f1f4fc;
    font-size: 17px;
    color: #555;
    flex: none;
}
.task-search span {
    margin-left: 9px;
}
.task-search .ic {
    color: #222;
}
.flower {
    width: 50px;
    height: 32px;
    margin-left: auto;
    margin-right: 9px;
}
.task-icons {
    display: flex;
    margin-left: 2px;
}
.t-app {
    position: relative;
    display: flex;
    align-items: center;
    justify-content: center;
    width: 55px;
    height: 56px;
}
.t-app svg {
    width: 32px;
    height: 32px;
}
.has-dot::after,
.has-bar::after {
    content: "";
    position: absolute;
    bottom: 1px;
    left: 24px;
    width: 7px;
    height: 5px;
    border-radius: 2px;
    background: #7a7f88;
}
.has-bar::after {
    left: 18px;
    width: 18px;
    background: #0a6cd6;
}
.t-chrome {
    background: #e9effb;
    border-radius: 6px;
}
.chrome-p {
    position: absolute;
    top: 3px;
    right: 4px;
    width: 20px;
    height: 20px;
    border-radius: 50%;
    background: #ab47bc;
    color: #fff;
    font-size: 11px;
    font-weight: 400;
    line-height: 20px;
    text-align: center;
}
.wa-count {
    position: absolute;
    top: 4px;
    right: 2px;
    width: 23px;
    height: 23px;
    border-radius: 50%;
    background: #0a6cd6;
    color: #fff;
    font-size: 13px;
    font-weight: 400;
    line-height: 23px;
    text-align: center;
}
.tray {
    display: flex;
    align-items: center;
    margin-left: auto;
    color: #1a1a1a;
}
.tray-up {
    width: 20px;
    height: 20px;
    stroke-width: 1.8;
}
.lang {
    display: flex;
    flex-direction: column;
    align-items: center;
    margin: 0 21px 0 22px;
    font-size: 14.5px;
    line-height: 21px;
}
.tray-ic {
    width: 22px;
    height: 22px;
    margin-right: 8px;
}
.clock {
    display: flex;
    flex-direction: column;
    align-items: flex-end;
    margin-left: 11px;
    font-size: 15.5px;
    letter-spacing: -.2px;
    line-height: 21px;
}
.bell {
    width: 22px;
    height: 24px;
    margin: 0 24px 0 7px;
}
.desk-icon {
    position: absolute;
    left: 1418px;
    top: 1060px;
    width: 28px;
    height: 22px;
}
```
